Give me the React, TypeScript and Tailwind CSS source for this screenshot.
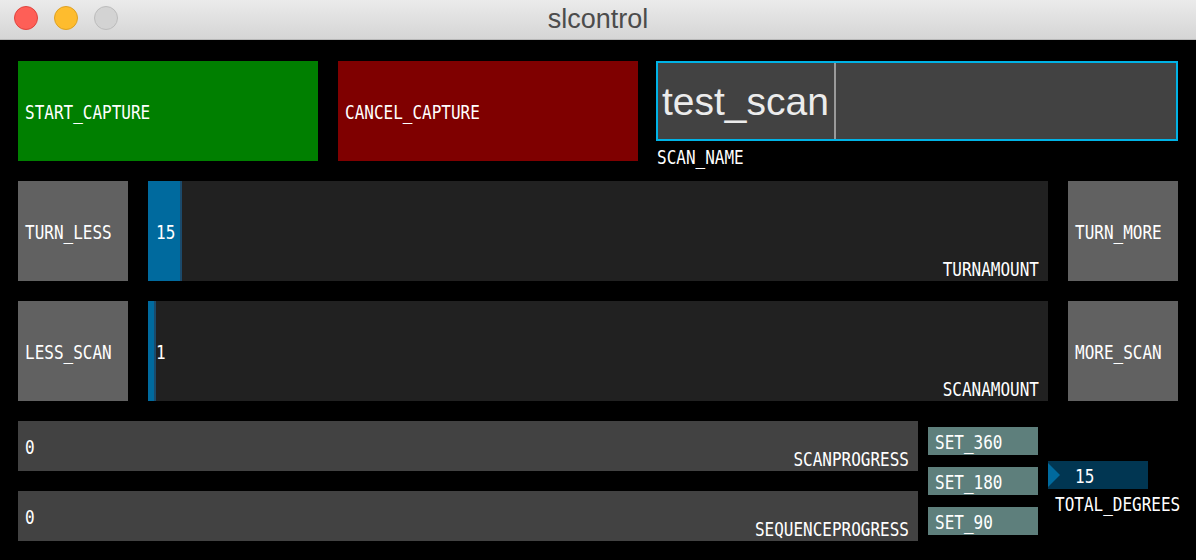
import React from 'react'

const pixel = "font-['DejaVu_Sans_Mono',monospace] text-[16px] leading-none text-white"

function Label({ children, className = '' }: { children: React.ReactNode; className?: string }) {
  return <span className={`${pixel} inline-block translate-y-[2px] scale-y-[1.18] ${className}`}>{children}</span>
}

function Button({ label, className }: { label: string; className: string }) {
  return (
    <div className={`flex items-center pl-[7px] ${className}`}>
      <Label>{label}</Label>
    </div>
  )
}

function Slider({ value, fill, label }: { value: string; fill: number; label: string }) {
  return (
    <div className="relative flex h-[100px] w-[900px] bg-[#212121]">
      <div className="flex h-full" style={{ width: fill }}>
        <div className="h-full flex-1 bg-[#006a9e]" />
        <div className="h-full w-[2px] bg-[#1b4a6b]" />
      </div>
      <div className="absolute left-[8px] top-0 flex h-full items-center">
        <Label>{value}</Label>
      </div>
      <div className="absolute bottom-[2px] right-[9px]">
        <Label>{label}</Label>
      </div>
    </div>
  )
}

function Progress({ label }: { label: string }) {
  return (
    <div className="relative flex h-[50px] w-[900px] items-center bg-[#424242] pl-[7px]">
      <Label>0</Label>
      <div className="absolute bottom-[2px] right-[9px]">
        <Label>{label}</Label>
      </div>
    </div>
  )
}

export default function App() {
  return (
    <div className="h-[560px] w-[1196px] overflow-hidden bg-black">
      {/* title bar */}
      <div className="relative flex h-[40px] items-center justify-center border-b border-[#b8b8b8] bg-gradient-to-b from-[#ebebeb] to-[#d5d5d5]">
        <div className="absolute left-[14px] top-[6px] flex gap-[16px]">
          <div className="h-[24px] w-[24px] rounded-full border border-[#e0443e] bg-[#fe5f57]" />
          <div className="h-[24px] w-[24px] rounded-full border border-[#dea123] bg-[#febc2e]" />
          <div className="h-[24px] w-[24px] rounded-full border border-[#bcbcbc] bg-[#d3d3d3]" />
        </div>
        <span className="font-['Liberation_Sans',sans-serif] text-[27px] leading-none text-[#4c4c4c]">slcontrol</span>
      </div>

      <div className="px-[18px] pt-[21px]">
        {/* row 1 */}
        <div className="flex h-[100px] items-start">
          <Button label="START_CAPTURE" className="h-[100px] w-[300px] bg-[#007f00]" />
          <Button label="CANCEL_CAPTURE" className="ml-[20px] h-[100px] w-[300px] bg-[#7f0000]" />
          <div className="ml-[18px] w-[522px]">
            <div className="flex h-[80px] items-center border-2 border-[#00b3e6] bg-[#424242]">
              <span className="pl-[4px] font-['Liberation_Sans',sans-serif] text-[39px] leading-none text-[#ececec]">test_scan</span>
              <div className="ml-[5px] h-full w-[2px] bg-[#9a9a9a]" />
            </div>
            <div className="mt-[2px] pl-[1px]">
              <Label>SCAN_NAME</Label>
            </div>
          </div>
        </div>

        {/* row 2 */}
        <div className="mt-[20px] flex gap-[20px]">
          <Button label="TURN_LESS" className="h-[100px] w-[110px] bg-[#616161]" />
          <Slider value="15" fill={34} label="TURNAMOUNT" />
          <Button label="TURN_MORE" className="h-[100px] w-[110px] bg-[#616161]" />
        </div>

        {/* row 3 */}
        <div className="mt-[20px] flex gap-[20px]">
          <Button label="LESS_SCAN" className="h-[100px] w-[110px] bg-[#616161]" />
          <Slider value="1" fill={8} label="SCANAMOUNT" />
          <Button label="MORE_SCAN" className="h-[100px] w-[110px] bg-[#616161]" />
        </div>

        {/* row 4 */}
        <div className="mt-[20px] flex">
          <div className="flex flex-col gap-[20px]">
            <Progress label="SCANPROGRESS" />
            <Progress label="SEQUENCEPROGRESS" />
          </div>
          <div className="ml-[10px] mt-[6px] flex flex-col gap-[12px]">
            <Button label="SET_360" className="h-[28px] w-[110px] bg-[#5e7f7c]" />
            <Button label="SET_180" className="h-[28px] w-[110px] bg-[#5e7f7c]" />
            <Button label="SET_90" className="h-[28px] w-[110px] bg-[#5e7f7c]" />
          </div>
          <div className="ml-[10px] mt-[40px]">
            <div className="flex h-[28px] w-[100px] items-center bg-[#013652]">
              <svg width="12" height="28" viewBox="0 0 12 28" className="shrink-0">
                <polygon points="0,2 12,14 0,26" fill="#006a9e" />
              </svg>
              <Label className="ml-[15px]">15</Label>
            </div>
            <div className="mt-[1px] pl-[7px]">
              <Label>TOTAL_DEGREES</Label>
            </div>
          </div>
        </div>
      </div>
    </div>
  )
}
